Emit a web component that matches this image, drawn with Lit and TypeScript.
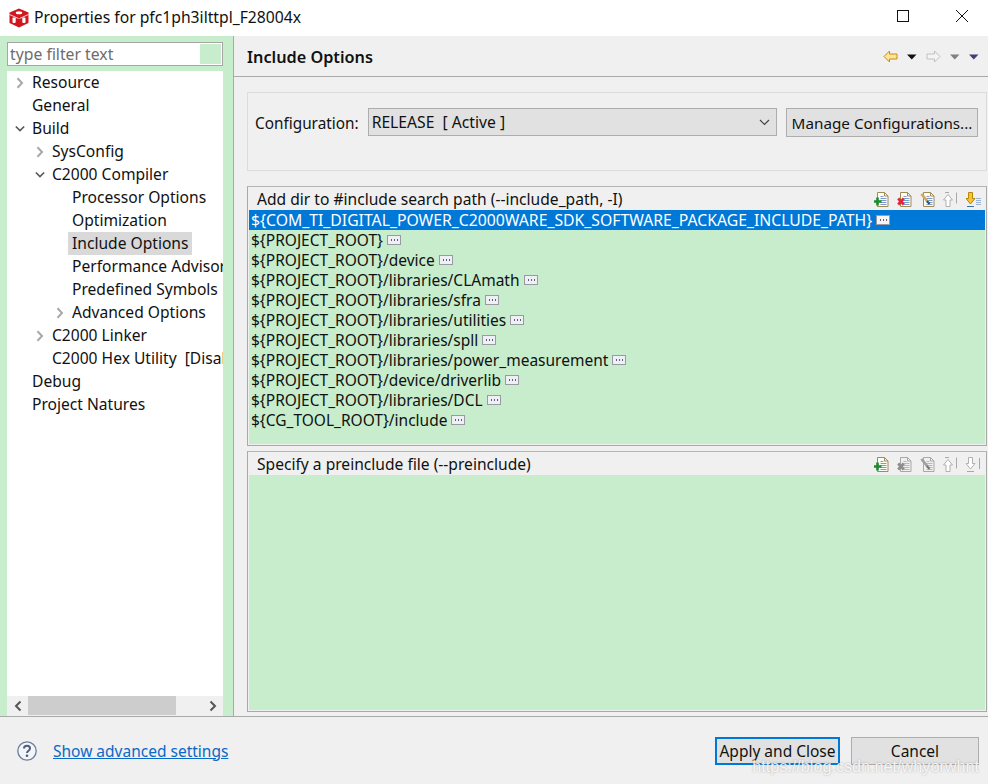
import { LitElement, html, css, svg } from "lit";
import { customElement } from "lit/decorators.js";

const tree: [number, string, string][] = [
  [0, "r", "Resource"],
  [0, "", "General"],
  [0, "d", "Build"],
  [1, "r", "SysConfig"],
  [1, "d", "C2000 Compiler"],
  [2, "", "Processor Options"],
  [2, "", "Optimization"],
  [2, "s", "Include Options"],
  [2, "", "Performance Advisor"],
  [2, "", "Predefined Symbols"],
  [2, "r", "Advanced Options"],
  [1, "r", "C2000 Linker"],
  [1, "", "C2000 Hex Utility  [Disabled]"],
  [0, "", "Debug"],
  [0, "", "Project Natures"],
];

const paths = [
  "${COM_TI_DIGITAL_POWER_C2000WARE_SDK_SOFTWARE_PACKAGE_INCLUDE_PATH}",
  "${PROJECT_ROOT}",
  "${PROJECT_ROOT}/device",
  "${PROJECT_ROOT}/libraries/CLAmath",
  "${PROJECT_ROOT}/libraries/sfra",
  "${PROJECT_ROOT}/libraries/utilities",
  "${PROJECT_ROOT}/libraries/spll",
  "${PROJECT_ROOT}/libraries/power_measurement",
  "${PROJECT_ROOT}/device/driverlib",
  "${PROJECT_ROOT}/libraries/DCL",
  "${CG_TOOL_ROOT}/include",
];

const doc = (on: boolean) => svg`
  <path d="M3.500 1.500h7l3.500 3.500v10.500h-10.500z" fill=${on ? "#fdfdf8" : "none"} stroke=${on ? "#a08a58" : "#a8a8a8"}/>
  <path d="M10.500 1.500v3.500h3.500" fill="none" stroke=${on ? "#a08a58" : "#a8a8a8"}/>
  <path d="M6.500 5.500h3M6.500 7.500h6M6.500 9.500h6M6.500 11.500h6M6.500 13.500h6" stroke=${on ? "#7f9cc8" : "#b8b8b8"}/>`;

const addIcon = () => html`<svg class="ti" viewBox="0 0 16 16">${doc(true)}
  <path d="M3.500 6.500v8M0 10.500h7.500" stroke="#1d8a2e" stroke-width="2.600"/></svg>`;
const delIcon = (on: boolean) => html`<svg class="ti" viewBox="0 0 16 16">${doc(on)}
  <path d="M1.200 7.500l5.600 6M6.800 7.500l-5.600 6" stroke=${on ? "#e0283a" : "#8e8e8e"} stroke-width="2.800"/></svg>`;
const editIcon = (on: boolean) => html`<svg class="ti" viewBox="0 0 16 16">${doc(on)}
  <path d="M1.500 3l6 7.500" stroke=${on ? "#d0a964" : "#a0a0a0"} stroke-width="2.800"/>
  <path d="M7 10l2.500 3" stroke=${on ? "#2f4f7f" : "#777"} stroke-width="2"/></svg>`;
const upIcon = () => html`<svg class="ti" viewBox="0 0 16 16">
  <path d="M2 1.500h4" stroke="#a8a8a8" fill="none"/>
  <path d="M13.500 1.500v11" stroke="#a8a8a8" fill="none"/>
  <path d="M5 3.500l4.500 5.500h-2.500v6.500h-4v-6.500h-2.500z" fill="#fff" stroke="#b0b0b0"/></svg>`;
const downIcon = (on: boolean) => html`<svg class="ti" viewBox="0 0 16 16">
  <path d="M1 15.500h7" stroke=${on ? "#3a6ea8" : "#a8a8a8"}/>
  ${on
    ? svg`<path d="M10 7.500h5M10 9.500h5M10 11.500h5M10 13.500h5" stroke="#9fb4d4"/>`
    : svg`<path d="M13.500 2v11" stroke="#a8a8a8"/>`}
  <path d="M2.500 1.500h4v6h2.500l-4.500 5.500-4.500-5.500h2.500z" fill=${on ? "#f7c531" : "#fff"} stroke=${on ? "#b8860b" : "#b0b0b0"}/></svg>`;

const chevR = html`<svg class="chev" viewBox="0 0 10 12"><path d="M2.500 1.200l4.500 4.800-4.500 4.800" fill="none" stroke="#a8a8a8" stroke-width="2"/></svg>`;
const chevD = html`<svg class="chev" viewBox="0 0 12 10"><path d="M1 2l5 5 5-5" fill="none" stroke="#595959" stroke-width="2"/></svg>`;

@customElement("app-root")
export class AppRoot extends LitElement {
  static styles = css`
    :host {
      display: flex;
      flex-direction: column;
      width: 988px;
      height: 784px;
      background: #f0f0f0;
      font-family: "Noto Sans", "Open Sans", sans-serif;
      font-size: 15.5px;
      color: #111;
      position: relative;
      overflow: hidden;
    }
    .title {
      height: 36px;
      flex: none;
      background: #fff;
      display: flex;
      align-items: center;
      padding-left: 9px;
      gap: 5px;
      font-size: 15.7px;
    }
    .logo { width: 20px; height: 20px; flex: none; }
    .title span { flex: 1; position: relative; top: -1px; }
    .wbtns { display: flex; gap: 47px; padding: 0 20px 4px 0; }
    .wbtns svg { width: 12px; height: 12px; display: block; }
    .main { flex: 1; display: flex; min-height: 0; }
    aside {
      flex: none;
      background: #c7edcc;
      border-right: 1px solid #a9a9a9;
      padding: 6px 10px 0 7px;
      width: 216px;
      display: flex;
      flex-direction: column;
    }
    .filter {
      height: 24px;
      box-sizing: border-box;
      border: 1px solid #a6a6a6;
      background: #fff;
      display: flex;
      align-items: stretch;
      color: #6d6d6d;
      padding: 1px;
      margin-bottom: 5px;
      font-size: 15.75px;
    }
    .filter span { flex: 1; padding-left: 1px; line-height: 20px; white-space: nowrap; }
    .filter i { width: 21px; background: #c7edcc; display: block; }
    .tree {
      flex: 1;
      background: #fff;
      display: flex;
      flex-direction: column;
      min-height: 0;
      overflow: hidden;
      font-size: 15.6px;
    }
    .items { flex: 1; overflow: hidden; }
    .row {
      height: 23px;
      display: flex;
      align-items: center;
      white-space: pre;
    }
    .row .arrow { width: 14px; height: 14px; flex: none; display: flex; align-items: center; justify-content: center; margin-left: 6px; margin-right: 5px; }
    .chev { width: 10px; height: 12px; }
    .row .label { padding: 0 4px; line-height: 23px; margin-left: -4px; }
    .row .label.sel { background: #d9d9d9; }
    .l0 { padding-left: 0; }
    .l1 { padding-left: 20px; }
    .l2 { padding-left: 40px; }
    .hbar { height: 20px; flex: none; background: #f0f0f0; display: flex; align-items: center; }
    .hbar .btn { width: 21px; display: flex; justify-content: center; flex: none; }
    .hbar svg { width: 10px; height: 12px; }
    .hbar .thumb { width: 148px; height: 19px; background: #cdcdcd; flex: none; margin-bottom: 1px; }
    .hbar .sp { flex: 1; }
    .content { flex: 1; display: flex; flex-direction: column; min-width: 0; }
    .chead {
      height: 41px;
      flex: none;
      box-sizing: border-box;
      border-bottom: 1px solid #a9a9a9;
      display: flex;
      align-items: center;
      padding: 1px 9px 0 13px;
    }
    .chead b { flex: 1; font-size: 16.25px; font-weight: 600; }
    .nav { display: flex; align-items: center; }
    .nav svg { display: block; }
    .body { flex: 1; padding: 15px 1px 4px 13px; display: flex; flex-direction: column; min-height: 0; }
    .config {
      height: 79px;
      flex: none;
      box-sizing: border-box;
      border: 1px solid #dcdcdc;
      display: flex;
      align-items: flex-start;
      padding: 15px 8px 0 7px;
      margin-bottom: 15px;
    }
    .config .lab { line-height: 30px; margin-right: 9px; white-space: nowrap; font-size: 15.35px; }
    .combo {
      flex: 1;
      height: 28px;
      box-sizing: border-box;
      border: 1px solid #adadad;
      background: #e1e1e1;
      display: flex;
      align-items: center;
      justify-content: space-between;
      padding: 0 6px 0 3px;
      white-space: pre;
      margin-right: 9px;
      font-size: 15.7px;
    }
    .combo svg { width: 11px; height: 7px; }
    .mbtn, .btn2 {
      box-sizing: border-box;
      border: 1px solid #adadad;
      background: #e1e1e1;
      display: flex;
      align-items: center;
      justify-content: center;
      white-space: nowrap;
    }
    .mbtn { width: 192px; height: 29px; font-size: 15.25px; }
    .sec {
      flex: none;
      box-sizing: border-box;
      border: 1px solid #a9a9a9;
      border-top-color: #b5b5b5;
      display: flex;
      flex-direction: column;
      padding: 0 1px 1px;
      font-size: 15.5px;
    }
    .sec.a { height: 260px; margin-bottom: 5px; }
    .sec.b { height: 261px; }
    .sechead { height: 23px; flex: none; display: flex; align-items: center; padding: 0 3px 0 8px; font-size: 15.6px; }
    .sechead span { flex: 1; white-space: nowrap; }
    .tools { display: flex; gap: 7px; }
    .ti { width: 16px; height: 16px; display: block; flex: none; }
    .list { flex: 1; background: #c7edcc; min-height: 0; }
    .p { height: 20px; display: flex; align-items: center; padding-left: 2px; white-space: nowrap; gap: 4px; }
    .p.sel { background: #0078d7; color: #fff; font-size: 15.75px; }
    .more { width: 14px; height: 10px; flex: none; display: block; }
    .foot {
      height: 68px;
      flex: none;
      box-sizing: border-box;
      border-top: 1px solid #a9a9a9;
      display: flex;
      align-items: center;
      padding: 0 9px 0 17px;
    }
    .help { width: 20px; height: 20px; flex: none; margin-right: 16px; }
    a { color: #0a69c6; text-decoration: underline; flex: 1; }
    .btn2 { height: 28px; width: 125px; }
    .btn2.def { border: 2px solid #0078d7; margin-right: 11px; }
    .btn2.cancel { width: 128px; }
    .mark {
      position: absolute;
      right: 9px;
      bottom: 8px;
      font-family: "Liberation Sans", sans-serif;
      font-size: 16.2px;
      color: rgba(255, 255, 255, 0.85);
      text-shadow: 0 0 2px rgba(110, 110, 110, 0.55);
      white-space: nowrap;
    }
  `;

  private more(sel: boolean) {
    return html`<svg class="more" viewBox="0 0 14 10">
      <rect x=".5" y=".5" width="13" height="9" fill=${sel ? "#f4f4f4" : "#eef0f6"} stroke="#9a9aa4"/>
      <path d="M4 5h1M7 5h1M10 5h1" stroke="#30304a" stroke-width="1.500"/>
    </svg>`;
  }

  render() {
    return html`
      <div class="title">
        <svg class="logo" viewBox="0 0 20 20">
          <path d="M10 .5L19.500 4.500v10.500L10 19.500 .5 15V4.500z" fill="#d2161e"/>
          <ellipse cx="10" cy="4.800" rx="3.200" ry="1.500" fill="#fff"/>
          <path d="M.5 6.500l9 4M19.500 6.500l-9 4" stroke="#fff" stroke-width=".8" fill="none"/>
          <rect x="3.500" y="9.500" width="3.200" height="5.500" rx="1" fill="#fff"/>
          <rect x="13.300" y="9.500" width="3.200" height="5.500" rx="1" fill="#fff"/>
        </svg>
        <span>Properties for pfc1ph3ilttpl_F28004x</span>
        <div class="wbtns">
          <svg viewBox="0 0 12 12"><rect x=".5" y=".5" width="11" height="11" fill="none" stroke="#111"/></svg>
          <svg viewBox="0 0 12 12"><path d="M0 0l12 12M12 0L0 12" stroke="#111"/></svg>
        </div>
      </div>
      <div class="main">
        <aside>
          <div class="filter"><span>type filter text</span><i></i></div>
          <div class="tree">
            <div class="items">
              ${tree.map(
                ([lv, k, t]) => html`<div class="row l${lv}">
                  <span class="arrow">${k === "r" ? chevR : k === "d" ? chevD : ""}</span>
                  <span class="label ${k === "s" ? "sel" : ""}">${t}</span>
                </div>`
              )}
            </div>
            <div class="hbar">
              <span class="btn"><svg viewBox="0 0 10 12"><path d="M7.500 1.500L3 6l4.500 4.500" fill="none" stroke="#555" stroke-width="2"/></svg></span>
              <span class="thumb"></span>
              <span class="sp"></span>
              <span class="btn"><svg viewBox="0 0 10 12"><path d="M2.500 1.500L7 6l-4.500 4.500" fill="none" stroke="#555" stroke-width="2"/></svg></span>
            </div>
          </div>
        </aside>
        <div class="content">
          <div class="chead">
            <b>Include Options</b>
            <div class="nav">
              <svg width="15" height="13" viewBox="0 0 15 13"><path d="M6.500 1L1 6.500 6.500 12V9h7.500V4H6.500z" fill="#fce49a" stroke="#c98a1a"/></svg>
              <svg width="28" height="13" viewBox="0 0 28 13"><path d="M9 4.500h9.500l-4.750 5z" fill="#111"/></svg>
              <svg width="15" height="13" viewBox="0 0 15 13"><path d="M8.500 1L14 6.500 8.500 12V9H1V4h7.500z" fill="#f4f4f4" stroke="#c0c0c0"/></svg>
              <svg width="28" height="13" viewBox="0 0 28 13"><path d="M9 4.500h9.500l-4.750 5z" fill="#808080"/></svg>
              <svg width="10" height="13" viewBox="0 0 10 13"><path d="M0 4.500h9.500l-4.750 5z" fill="#4b3a78"/></svg>
            </div>
          </div>
          <div class="body">
            <div class="config">
              <span class="lab">Configuration:</span>
              <div class="combo"><span>RELEASE  [ Active ]</span>
                <svg viewBox="0 0 11 7"><path d="M1 1l4.500 4.500L10 1" fill="none" stroke="#444" stroke-width="1.200"/></svg></div>
              <div class="mbtn">Manage Configurations...</div>
            </div>
            <div class="sec a">
              <div class="sechead"><span>Add dir to #include search path (--include_path, -I)</span>
                <div class="tools">${addIcon()}${delIcon(true)}${editIcon(true)}${upIcon()}${downIcon(true)}</div></div>
              <div class="list">
                ${paths.map((p, i) => html`<div class="p ${i === 0 ? "sel" : ""}"><span>${p}</span>${this.more(i === 0)}</div>`)}
              </div>
            </div>
            <div class="sec b">
              <div class="sechead"><span>Specify a preinclude file (--preinclude)</span>
                <div class="tools">${addIcon()}${delIcon(false)}${editIcon(false)}${upIcon()}${downIcon(false)}</div></div>
              <div class="list"></div>
            </div>
          </div>
        </div>
      </div>
      <div class="foot">
        <svg class="help" viewBox="0 0 20 20">
          <circle cx="10" cy="10" r="9.200" fill="#f4f5f8" stroke="#6b7c9c" stroke-width="1.300"/>
          <path d="M7 7.500C7 5.500 8.500 4.800 10 4.800s3 .9 3 2.600c0 2.300-3 2.300-3 4.600" fill="none" stroke="#4e5e7c" stroke-width="2"/>
          <circle cx="10" cy="14.700" r="1.300" fill="#4e5e7c"/>
        </svg>
        <a>Show advanced settings</a>
        <div class="btn2 def">Apply and Close</div>
        <div class="btn2 cancel">Cancel</div>
      </div>
      <div class="mark">https://blog.csdn.net/whyorwhnt</div>
    `;
  }
}
